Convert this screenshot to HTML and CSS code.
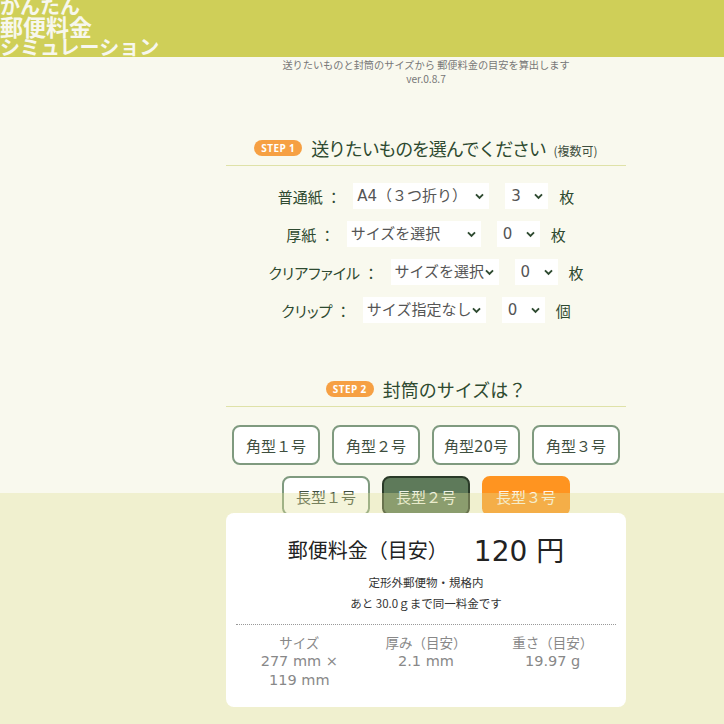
FILE: index.html
```html
<!DOCTYPE html>
<html lang="ja">
<head>
<meta charset="utf-8">
<title>かんたん郵便料金シミュレーション</title>
<link rel="stylesheet" href="styles.css">
</head>
<body>
<header class="site-header">
  <h1 class="logo">
    <span class="logo-sm">かんたん</span>
    <span class="logo-lg">郵便料金</span>
    <span class="logo-sm">シミュレーション</span>
  </h1>
</header>
<main class="main">
  <p class="lead">送りたいものと封筒のサイズから 郵便料金の目安を算出します<br>ver.0.8.7</p>

  <section class="step step1">
    <h2 class="step-title"><span class="badge">STEP 1</span><span class="step-text">送りたいものを選んでください</span><small class="step-note">(複数可)</small></h2>
    <div class="rows">
      <div class="row">
        <span class="label"><span class="word">普通紙</span> ：</span>
        <span class="sel w136"><select><option>A4（３つ折り）</option></select><svg class="chev" viewBox="0 0 10 8" width="9" height="7"><path d="M1 1.5 L5 5.5 L9 1.5" fill="none" stroke="#2e4a30" stroke-width="2.2"/></svg></span>
        <span class="sel num"><select><option>3</option></select><svg class="chev" viewBox="0 0 10 8" width="9" height="7"><path d="M1 1.5 L5 5.5 L9 1.5" fill="none" stroke="#2e4a30" stroke-width="2.2"/></svg></span>
        <span class="unit">枚</span>
      </div>
      <div class="row">
        <span class="label"><span class="word">厚紙</span> ：</span>
        <span class="sel w134"><select><option>サイズを選択</option></select><svg class="chev" viewBox="0 0 10 8" width="9" height="7"><path d="M1 1.5 L5 5.5 L9 1.5" fill="none" stroke="#2e4a30" stroke-width="2.2"/></svg></span>
        <span class="sel num"><select><option>0</option></select><svg class="chev" viewBox="0 0 10 8" width="9" height="7"><path d="M1 1.5 L5 5.5 L9 1.5" fill="none" stroke="#2e4a30" stroke-width="2.2"/></svg></span>
        <span class="unit">枚</span>
      </div>
      <div class="row">
        <span class="label"><span class="word">クリアファイル</span> ：</span>
        <span class="sel w108"><select><option>サイズを選択</option></select><svg class="chev" viewBox="0 0 10 8" width="9" height="7"><path d="M1 1.5 L5 5.5 L9 1.5" fill="none" stroke="#2e4a30" stroke-width="2.2"/></svg></span>
        <span class="sel num"><select><option>0</option></select><svg class="chev" viewBox="0 0 10 8" width="9" height="7"><path d="M1 1.5 L5 5.5 L9 1.5" fill="none" stroke="#2e4a30" stroke-width="2.2"/></svg></span>
        <span class="unit">枚</span>
      </div>
      <div class="row">
        <span class="label"><span class="word">クリップ</span> ：</span>
        <span class="sel w123"><select><option>サイズ指定なし</option></select><svg class="chev" viewBox="0 0 10 8" width="9" height="7"><path d="M1 1.5 L5 5.5 L9 1.5" fill="none" stroke="#2e4a30" stroke-width="2.2"/></svg></span>
        <span class="sel num"><select><option>0</option></select><svg class="chev" viewBox="0 0 10 8" width="9" height="7"><path d="M1 1.5 L5 5.5 L9 1.5" fill="none" stroke="#2e4a30" stroke-width="2.2"/></svg></span>
        <span class="unit">個</span>
      </div>
    </div>
  </section>

  <section class="step step2">
    <h2 class="step-title"><span class="badge">STEP 2</span><span class="step-text">封筒のサイズは？</span></h2>
    <div class="btns">
      <button class="env">角型１号</button>
      <button class="env">角型２号</button>
      <button class="env">角型20号</button>
      <button class="env">角型３号</button>
    </div>
    <div class="btns">
      <button class="env">長型１号</button>
      <button class="env active">長型２号</button>
      <button class="env hot">長型３号</button>
    </div>
  </section>
</main>

<aside class="result-bar">
  <div class="card">
    <div class="price">
      <span class="price-label">郵便料金（目安）</span>
      <span class="price-value">120 円</span>
    </div>
    <p class="price-note">定形外郵便物・規格内<br>あと 30.0ｇまで同一料金です</p>
    <div class="specs">
      <div class="spec"><div class="spec-k">サイズ</div><div class="spec-v">277 mm ×<br>119 mm</div></div>
      <div class="spec"><div class="spec-k">厚み（目安）</div><div class="spec-v">2.1 mm</div></div>
      <div class="spec"><div class="spec-k">重さ（目安）</div><div class="spec-v">19.97 g</div></div>
    </div>
  </div>
</aside>
</body>
</html>
```
FILE: styles.css
```css
* { box-sizing: border-box; }
html, body { margin: 0; padding: 0; }
body {
  background: #f9f9ee;
  font-family: "DejaVu Sans", "Noto Sans CJK JP", sans-serif;
  color: #2e4a30;
  height: 724px;
  overflow: hidden;
}
.site-header {
  background: #cfcf58;
  height: 57px;
  overflow: hidden;
}
.logo {
  margin: 0;
  margin-top: -4px;
  display: flex;
  flex-direction: column;
  color: #f7f7ee;
  font-family: "Noto Sans CJK JP", sans-serif;
  font-weight: 700;
  line-height: 20px;
}
.logo-sm { font-size: 20px; height: 20px; }
.logo-lg { font-size: 23px; height: 20.5px; }

.main {
  margin-left: 226px;
  width: 400px;
}
.lead {
  margin: 0;
  padding-top: 1px;
  text-align: center;
  font-family: "Noto Sans CJK JP", sans-serif;
  font-size: 10.2px;
  line-height: 14px;
  color: #777;
}
.step-title {
  margin: 0;
  display: flex;
  align-items: flex-end;
  justify-content: center;
  font-weight: 400;
  border-bottom: 1px solid #dfe2a8;
  height: 37px;
  padding-bottom: 4px;
}
.step1 .step-title { margin-top: 43px; }
.badge {
  display: inline-block;
  background: #f6a043;
  color: #fff;
  font-family: "Open Sans", "DejaVu Sans", sans-serif;
  font-weight: 700;
  font-size: 10px;
  line-height: 16px;
  height: 16px;
  padding: 0 7px;
  border-radius: 8px;
  letter-spacing: 0.4px;
  margin-right: 9px;
  margin-bottom: 5px;
}
.step-text {
  font-family: "Noto Sans CJK JP", sans-serif;
  font-size: 18px;
  line-height: 26px;
  color: #2e4a30;
}
.step1 .step-text { letter-spacing: -1.2px; }
.step-note {
  font-family: "Noto Sans CJK JP", sans-serif;
  font-size: 12px;
  line-height: 20px;
  color: #3f4f3f;
  margin-left: 8px;
}
.rows {
  display: flex;
  flex-direction: column;
  align-items: center;
  gap: 12px;
  padding-top: 17px;
}
.row {
  display: flex;
  align-items: center;
  height: 26px;
  font-size: 15px;
}
.label {
  font-family: "Noto Sans CJK JP", sans-serif;
  color: #2e4a30;
  margin-right: 12px;
  white-space: pre;
}
.word { font-feature-settings: "palt"; }
.sel {
  display: inline-flex;
  align-items: center;
  background: #fff;
  height: 26px;
  padding-right: 5px;
}
.sel select {
  appearance: none;
  -webkit-appearance: none;
  border: 0;
  background: transparent;
  font: inherit;
  font-family: "DejaVu Sans", "Noto Sans CJK JP", sans-serif;
  font-size: 15px;
  color: #555;
  padding: 0 0 0 4px;
  flex: 1;
  min-width: 0;
  height: 26px;
}
.chev { flex: none; }
.w136 { width: 136px; }
.w134 { width: 134px; }
.w108 { width: 108px; }
.w123 { width: 123px; }
.num { width: 43px; margin-left: 16px; }
.num select { padding-left: 6px; }
.unit {
  font-family: "Noto Sans CJK JP", sans-serif;
  margin-left: 11px;
  color: #2e4a30;
}
.step2 .step-title { margin-top: 47px; }
.btns {
  display: flex;
  justify-content: center;
  gap: 12px;
}
.btns:first-of-type { margin-top: 18px; }
.btns + .btns { margin-top: 11px; }
.env {
  width: 88px;
  height: 40px;
  border: 2px solid #7f9a7f;
  border-radius: 8px;
  background: #fff;
  font-family: "DejaVu Sans", "Noto Sans CJK JP", sans-serif;
  font-size: 15px;
  color: #3f4f3f;
  padding: 0;
}
.env.active {
  background: #5e7a5a;
  border-color: #2a3a28;
  color: #eef2e8;
}
.env.hot {
  background: #ff9420;
  border-color: #ff9420;
  color: #fff5e8;
}

.result-bar {
  position: fixed;
  left: 0;
  right: 0;
  bottom: 0;
  height: 231px;
  background: rgba(223, 223, 149, 0.35);
  padding: 20px 0 0 226px;
}
.card {
  width: 400px;
  height: 194px;
  background: #fff;
  border-radius: 8px;
  padding: 12px 10px 0;
}
.price {
  display: flex;
  justify-content: center;
  align-items: center;
  gap: 26px;
  height: 48px;
  color: #222;
}
.price-label {
  font-family: "Noto Sans CJK JP", sans-serif;
  font-size: 20px;
}
.price-value {
  font-family: "DejaVu Sans", "Noto Sans CJK JP", sans-serif;
  font-size: 28px;
}
.price-note {
  margin: -1px 0 0;
  text-align: center;
  font-family: "Noto Sans CJK JP", sans-serif;
  font-size: 11.5px;
  line-height: 21px;
  color: #333;
  padding-bottom: 10px;
  border-bottom: 1px dotted #999;
}
.specs {
  display: grid;
  grid-template-columns: repeat(3, 1fr);
  text-align: center;
  padding-top: 8px;
  color: #888;
  font-size: 13px;
  line-height: 19px;
}
.spec-k { font-family: "Noto Sans CJK JP", sans-serif; font-size: 13.5px; }
.spec-v { font-family: "DejaVu Sans", "Noto Sans CJK JP", sans-serif; font-size: 14.5px; }
```
